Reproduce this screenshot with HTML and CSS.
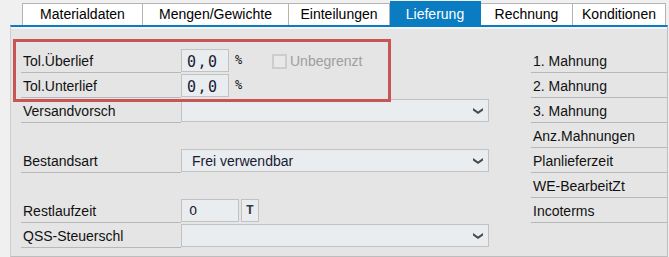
FILE: index.html
```html
<!DOCTYPE html>
<html lang="de">
<head>
  <meta charset="UTF-8" />
  <meta name="viewport" content="width=device-width, initial-scale=1.0" />
  <title>Lieferung</title>
  <link rel="stylesheet" href="styles.css">
</head>
<body>
  <div class="tabs">
    <div class="tab tab-mat">Materialdaten</div>
    <div class="tab tab-men">Mengen/Gewichte</div>
    <div class="tab tab-ein">Einteilungen</div>
    <div class="tab tab-lie active">Lieferung</div>
    <div class="tab tab-rec">Rechnung</div>
    <div class="tab tab-kon">Konditionen</div>
  </div>

  <div class="panel">
    <div class="highlight"></div>
    <div class="form">
      <div class="col-left">
        <div class="row">
          <div class="label">Tol.Überlief</div>
          <div class="field num">0,0</div>
          <span class="unit">%</span>
          <span class="check"></span>
          <span class="check-label">Unbegrenzt</span>
        </div>
        <div class="row">
          <div class="label">Tol.Unterlief</div>
          <div class="field num">0,0</div>
          <span class="unit">%</span>
        </div>
        <div class="row">
          <div class="label">Versandvorsch</div>
          <div class="field select"><span></span><svg class="chev" width="10" height="6" viewBox="0 0 10 6"><path d="M0 0 L5 3.5 L10 0 L10 2.5 L5 6 L0 2.5 Z" fill="#4a4a4a"/></svg></div>
        </div>
        <div class="row"></div>
        <div class="row">
          <div class="label">Bestandsart</div>
          <div class="field select"><span>Frei verwendbar</span><svg class="chev" width="10" height="6" viewBox="0 0 10 6"><path d="M0 0 L5 3.5 L10 0 L10 2.5 L5 6 L0 2.5 Z" fill="#4a4a4a"/></svg></div>
        </div>
        <div class="row"></div>
        <div class="row">
          <div class="label">Restlaufzeit</div>
          <div class="field short">0</div>
          <div class="btn-t">T</div>
        </div>
        <div class="row">
          <div class="label">QSS-Steuerschl</div>
          <div class="field select"><span></span><svg class="chev" width="10" height="6" viewBox="0 0 10 6"><path d="M0 0 L5 3.5 L10 0 L10 2.5 L5 6 L0 2.5 Z" fill="#4a4a4a"/></svg></div>
        </div>
      </div>

      <div class="col-right">
        <div class="row"><div class="label wide">1. Mahnung</div></div>
        <div class="row"><div class="label wide">2. Mahnung</div></div>
        <div class="row"><div class="label wide">3. Mahnung</div></div>
        <div class="row"><div class="label wide">Anz.Mahnungen</div></div>
        <div class="row"><div class="label wide">Planlieferzeit</div></div>
        <div class="row"><div class="label wide">WE-BearbeitZt</div></div>
        <div class="row"><div class="label wide">Incoterms</div></div>
      </div>
    </div>
  </div>
</body>
</html>
```

FILE: styles.css
```css
body {
  margin: 0;
  background: #f0f0f0;
  font-family: 'Liberation Sans', Arial, sans-serif;
  font-size: 14px;
  color: #111;
  width: 669px;
  height: 257px;
  overflow: hidden;
}

.tabs {
  display: flex;
  margin-left: 22px;
  padding-top: 3px;
  height: 22px;
}

.tab {
  box-sizing: border-box;
  height: 22px;
  background: #fff;
  border: 1px solid #b4b4b4;
  border-bottom: none;
  border-left: none;
  text-align: center;
  line-height: 21px;
  font-size: 14px;
  color: #000;
}

.tab-mat { width: 121px; border-left: 1px solid #b4b4b4; }
.tab-men { width: 146px; }
.tab-ein { width: 101px; }
.tab-lie { width: 91px; }
.tab-rec { width: 92px; }
.tab-kon { width: 93px; }

.tab.active {
  background: #0a7cc1;
  border-color: #0a7cc1;
  color: #fff;
  height: 24px;
  margin-top: -2px;
  line-height: 25px;
}

.panel {
  position: relative;
  box-sizing: border-box;
  margin-left: 10px;
  width: 658px;
  height: 232px;
  border-top: 2px solid #0a7cc1;
  border-left: 1px solid #cfcfcf;
  border-right: 1px solid #bdbdbd;
  border-bottom: 1px solid #bdbdbd;
  background: #e5e5e5;
}

.panel::before {
  content: "";
  display: block;
  height: 2px;
  background: #f4f4f4;
}

.highlight {
  position: absolute;
  left: 2px;
  top: 12px;
  width: 372px;
  height: 57px;
  border: 3px solid #c85454;
}

.form {
  display: flex;
  padding: 19px 0 0 10px;
}

.col-left {
  width: 510px;
}

.col-right {
  flex: 1;
}

.row {
  display: flex;
  align-items: flex-start;
  height: 25px;
}

.label {
  box-sizing: border-box;
  width: 160px;
  height: 25px;
  padding: 5px 0 0 2px;
  border-bottom: 1px solid #b8b8b8;
  color: #111;
}

.label.wide {
  width: 136px;
}

.field {
  box-sizing: border-box;
  height: 23px;
  margin-top: 1px;
  background: #e9edf0;
  border: 1px solid #c2c2c2;
  color: #1a1a33;
}

.num {
  width: 48px;
  padding: 3px 0 0 5px;
  font-family: 'DejaVu Sans Mono', monospace;
  font-size: 15px;
  letter-spacing: 1.5px;
}

.unit {
  margin: 5px 0 0 6px;
  font-family: 'DejaVu Sans Mono', monospace;
  font-size: 12px;
  width: 37px;
}

.check {
  box-sizing: border-box;
  width: 15px;
  height: 15px;
  margin-top: 6px;
  border: 2px solid #cdcdcd;
  background: #e8e8e8;
}

.check-label {
  margin: 5px 0 0 3px;
  color: #9e9e9e;
}

.select {
  display: flex;
  justify-content: space-between;
  align-items: center;
  width: 308px;
  padding: 0 5px 0 10px;
}

.chev {
  margin-top: 1px;
}

.short {
  width: 58px;
  padding: 3px 0 0 7px;
  font-family: 'DejaVu Sans', sans-serif;
  font-size: 13px;
}

.btn-t {
  box-sizing: border-box;
  width: 18px;
  height: 23px;
  margin: 1px 0 0 2px;
  background: #e9edf0;
  border: 1px solid #c2c2c2;
  text-align: center;
  line-height: 21px;
  font-family: 'Liberation Mono', monospace;
  font-weight: bold;
  font-size: 13px;
  color: #3a3a3a;
}
```
